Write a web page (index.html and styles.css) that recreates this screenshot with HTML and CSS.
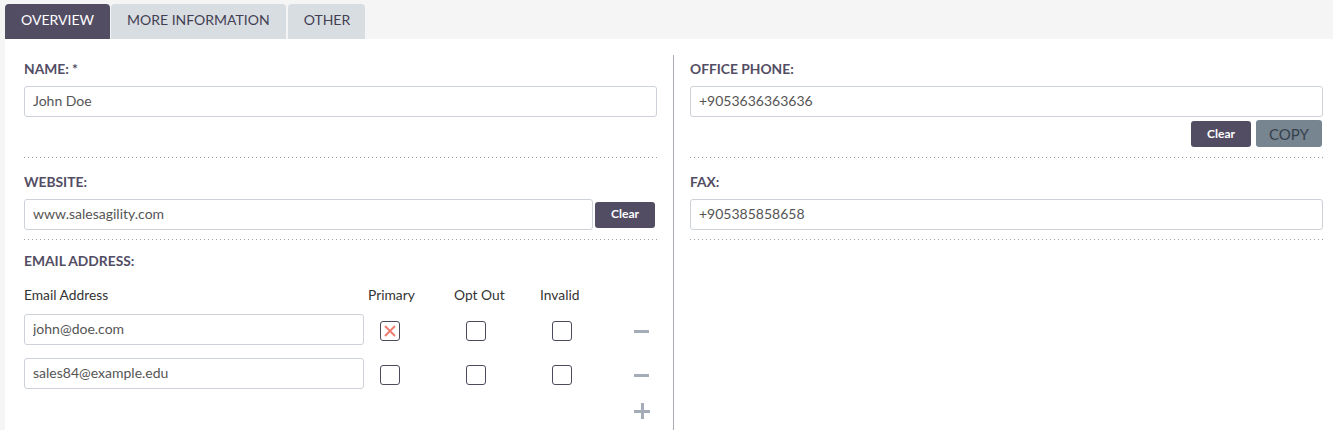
FILE: index.html
```html
<!DOCTYPE html>
<html lang="en">
<head>
<meta charset="utf-8">
<title>Contact</title>
<link rel="stylesheet" href="styles.css">
</head>
<body>
<div class="tabs">
  <div class="tab active">Overview</div>
  <div class="tab">More Information</div>
  <div class="tab">Other</div>
</div>
<div class="panel">
  <div class="col col-left">
    <div class="field field-first">
      <div class="label">Name: *</div>
      <input class="input" type="text" value="John Doe">
    </div>
    <div class="field field-next">
      <div class="label">Website:</div>
      <div class="input-row">
        <input class="input grow" type="text" value="www.salesagility.com">
        <button class="btn btn-clear btn-clear-web">Clear</button>
      </div>
    </div>
    <div class="field-email">
      <div class="label">Email Address:</div>
      <div class="email-grid">
        <div class="eh">Email Address</div>
        <div class="eh">Primary</div>
        <div class="eh">Opt Out</div>
        <div class="eh">Invalid</div>
        <div></div>

        <input class="input erow" type="text" value="john@doe.com">
        <div class="cell"><span class="cb checked"><svg width="14" height="14" viewBox="0 0 14 14"><path d="M2 2 L12 12 M12 2 L2 12" stroke="#ef7d72" stroke-width="2" fill="none"/></svg></span></div>
        <div class="cell"><span class="cb"></span></div>
        <div class="cell"><span class="cb"></span></div>
        <div class="cell"><span class="minus"></span></div>

        <input class="input erow erow2" type="text" value="sales84@example.edu">
        <div class="cell erow2"><span class="cb"></span></div>
        <div class="cell erow2"><span class="cb"></span></div>
        <div class="cell erow2"><span class="cb"></span></div>
        <div class="cell erow2"><span class="minus"></span></div>
      </div>
      <div class="add-row"><span class="plus"></span></div>
    </div>
  </div>
  <div class="col col-right">
    <div class="field field-first">
      <div class="label">Office Phone:</div>
      <input class="input" type="text" value="+9053636363636">
      <div class="btn-row">
        <button class="btn btn-clear">Clear</button>
        <button class="btn btn-copy">COPY</button>
      </div>
    </div>
    <div class="field field-next">
      <div class="label">Fax:</div>
      <input class="input" type="text" value="+905385858658">
    </div>
  </div>
</div>
</body>
</html>
```
FILE: styles.css
```css
* { box-sizing: border-box; }
html, body { margin: 0; padding: 0; }
body {
  background: #f5f5f5;
  font-family: Lato, "Liberation Sans", sans-serif;
  color: #333;
  width: 1333px;
  height: 430px;
  overflow: hidden;
}
.tabs {
  display: flex;
  padding: 4px 0 0 5px;
  height: 39px;
}
.tab {
  height: 35px;
  line-height: 32px;
  padding: 0 16px;
  margin-right: 1px;
  background: #d8dde2;
  color: #433f52;
  font-size: 14px;
  text-transform: uppercase;
  border-radius: 4px 4px 0 0;
}
.tab + .tab + .tab { margin-left: 1px; padding: 0 15px 0 16px; }
.tab.active { background: #534d64; color: #fff; }
.panel {
  margin-left: 5px;
  background: #fff;
  height: 391px;
  padding-top: 16px;
  display: grid;
  grid-template-columns: 669px 1fr;
}
.col-left {
  padding: 0 16px 0 19px;
  border-right: 1px solid #a8acb2;
}
.col-right {
  padding: 0 10px 0 16px;
}
.field {
  background-image: linear-gradient(to right, #a0a0a0 1px, transparent 1px);
  background-size: 4px 1px;
  background-repeat: repeat-x;
  background-position: left bottom;
}
.field-first { height: 103px; padding-top: 4px; }
.field-next { height: 82px; padding-top: 14px; }
.label {
  font-size: 13.8px;
  font-weight: 700;
  line-height: 20px;
  color: #534d64;
  text-transform: uppercase;
  margin-bottom: 7px;
}
.input {
  display: block;
  width: 100%;
  height: 31px;
  border: 1px solid #cdd2d8;
  border-radius: 3px;
  padding: 0 8px 2px;
  font-family: Lato, "Liberation Sans", sans-serif;
  font-size: 14px;
  color: #555;
  background: #fff;
  outline: none;
}
.input-row { display: flex; align-items: center; }
.input-row .grow { flex: 1; width: auto; }
.btn {
  border: none;
  border-radius: 3px;
  font-family: Lato, "Liberation Sans", sans-serif;
  padding: 0;
  cursor: pointer;
}
.btn-clear {
  width: 60px;
  height: 26px;
  background: #534d64;
  color: #fff;
  font-size: 12px;
  font-weight: 700;
  padding-bottom: 2px;
}
.btn-clear-web { margin: 0 2px 0 2px; }
.btn-row {
  display: flex;
  justify-content: flex-end;
  align-items: flex-start;
  margin-top: 3px;
  padding-right: 1px;
}
.btn-row .btn-clear { margin-top: 1px; }
.btn-copy {
  width: 66px;
  height: 27px;
  margin-left: 5px;
  background: #778590;
  color: #36414c;
  font-size: 15px;
}
.field-email { padding-top: 11px; }
.field-email .label { margin-bottom: 14px; }
.email-grid {
  display: grid;
  grid-template-columns: 344px 86px 86px 86px 1fr;
}
.eh {
  font-size: 13.8px;
  line-height: 20px;
  color: #333;
}
.erow { width: 340px; margin-top: 9px; }
.email-grid .cell { margin-top: 9px; padding-top: 7px; }
.email-grid .erow2 { margin-top: 13px; }
.cb {
  display: flex;
  align-items: center;
  justify-content: center;
  width: 20px;
  height: 20px;
  margin-left: 12px;
  border: 1.5px solid #4d4a5c;
  border-radius: 3px;
  background: #fff;
}
.minus {
  display: block;
  width: 15px;
  height: 3px;
  margin: 9px 0 0 8px;
  background: #a3acb7;
}
.add-row {
  padding: 14px 0 0 610px;
}
.plus {
  position: relative;
  display: block;
  width: 16px;
  height: 16px;
}
.plus::before, .plus::after {
  content: "";
  position: absolute;
  background: #a3acb7;
}
.plus::before { left: 0; top: 6.5px; width: 16px; height: 3px; }
.plus::after { left: 6.5px; top: 0; width: 3px; height: 16px; }
```
